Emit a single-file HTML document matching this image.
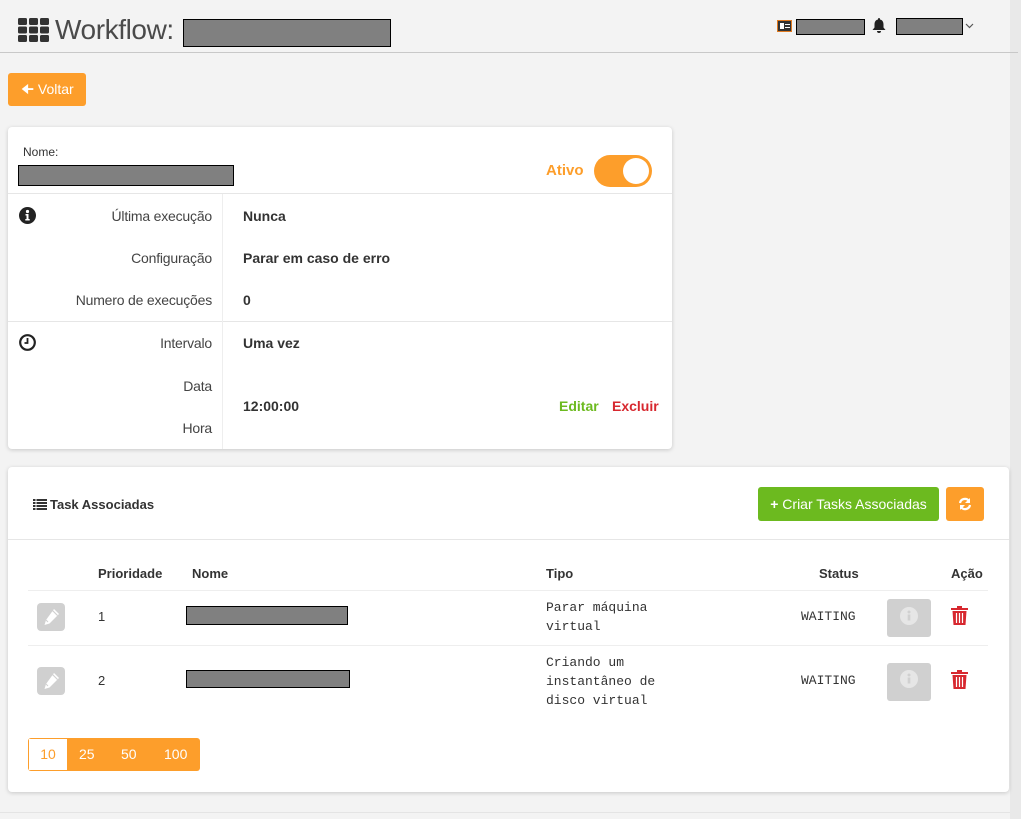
<!DOCTYPE html>
<html><head><meta charset="utf-8"><style>
*{box-sizing:border-box;margin:0;padding:0}
body{width:1021px;height:819px;background:#f3f3f3;font-family:"Liberation Sans",sans-serif;color:#333;position:relative;overflow:hidden}
.a{position:absolute}
.red{background:#808080;border:1px solid #000}
.card{background:#fff;border-radius:4px;box-shadow:0 1px 4px rgba(0,0,0,.18)}
.lbl{font-size:14px;color:#444;text-align:right;width:200px;left:12px;letter-spacing:-.2px}
.val{font-size:14px;font-weight:bold;color:#333;left:243px}
.mono{font-family:"Liberation Mono",monospace;font-size:13px;color:#333;line-height:19px}
.th{font-size:13px;font-weight:bold;color:#333}
.edit{width:28px;height:28px;background:#d0d0d0;border-radius:4px}
.info{width:44px;height:38px;background:#d0d0d0;border-radius:3px}
</style></head><body>
<div class="a" style="left:1010px;top:0;width:11px;height:819px;background:#e9e9e9"></div>
<!-- header -->
<svg class="a" style="left:18px;top:18px" width="31" height="24" viewBox="0 0 31 24">
<g fill="#333"><rect x="0" y="0" width="9" height="7" rx="1.5"/><rect x="11" y="0" width="9" height="7" rx="1.5"/><rect x="22" y="0" width="9" height="7" rx="1.5"/>
<rect x="0" y="8.5" width="9" height="7" rx="1.5"/><rect x="11" y="8.5" width="9" height="7" rx="1.5"/><rect x="22" y="8.5" width="9" height="7" rx="1.5"/>
<rect x="0" y="17" width="9" height="7" rx="1.5"/><rect x="11" y="17" width="9" height="7" rx="1.5"/><rect x="22" y="17" width="9" height="7" rx="1.5"/></g></svg>
<div class="a" style="left:55px;top:14px;font-size:28px;color:#4a4a4a;letter-spacing:-.4px">Workflow:</div>
<div class="a red" style="left:183px;top:19px;width:208px;height:28px"></div>
<div class="a" style="left:0;top:52px;width:1018px;height:1px;background:#c8c8c8"></div>
<div class="a" style="left:777px;top:20px;width:15px;height:12px;background:#333;border:1px solid #e07a20"><div style="position:absolute;left:2px;top:2px;width:4px;height:6px;background:#fff"></div><div style="position:absolute;left:7px;top:3px;width:5px;height:1px;background:#fff"></div><div style="position:absolute;left:7px;top:6px;width:5px;height:1px;background:#fff"></div></div>
<div class="a red" style="left:796px;top:19px;width:69px;height:16px"></div>
<svg class="a" style="left:872px;top:18px" width="14" height="15" viewBox="0 0 14 15"><path d="M7 0c1 0 1 1 1 1.5C10.5 2 11.5 4 11.5 6.5v3L13.5 12H.5l2-2.5v-3C2.5 4 3.5 2 6 1.5 6 1 6 0 7 0zM5 13h4a2 2 0 0 1-4 0z" fill="#222"/></svg>
<div class="a red" style="left:896px;top:18px;width:67px;height:17px"></div>
<svg class="a" style="left:965px;top:23px" width="9" height="6"><path d="M1 1l3.5 3.5L8 1" fill="none" stroke="#555" stroke-width="1.2"/></svg>
<!-- voltar -->
<div class="a" style="left:8px;top:73px;width:78px;height:33px;background:#fd9e2b;border-radius:3px;color:#fff;font-size:14px;line-height:33px;padding-left:13px">&#129032; Voltar</div>
<!-- card 1 -->
<div class="a card" style="left:8px;top:127px;width:664px;height:322px">
<div class="a" style="left:15px;top:18px;font-size:12px;color:#333">Nome:</div>
<div class="a red" style="left:10px;top:38px;width:216px;height:21px"></div>
<div class="a" style="left:538px;top:35px;font-size:15px;font-weight:bold;color:#fd9e2b">Ativo</div>
<div class="a" style="left:586px;top:28px;width:58px;height:32px;border-radius:16px;background:#fd9e2b"><div style="position:absolute;right:3px;top:3px;width:26px;height:26px;border-radius:50%;background:#fff"></div></div>
<div class="a" style="left:0;top:66px;width:664px;height:1px;background:#e6e6e6"></div>
<div class="a" style="left:0;top:194px;width:664px;height:1px;background:#e6e6e6"></div>
<div class="a" style="left:214px;top:67px;width:1px;height:255px;background:#eee"></div>
<svg class="a" style="left:11px;top:80px" width="17" height="17" viewBox="0 0 17 17"><circle cx="8.5" cy="8.5" r="8.5" fill="#222"/><circle cx="8.5" cy="4.5" r="1.6" fill="#fff"/><path d="M6.5 7h3v5h1.2v1.5H6.3V12h1.2V8.5h-1z" fill="#fff"/></svg>
<svg class="a" style="left:11px;top:207px" width="17" height="17" viewBox="0 0 17 17"><circle cx="8.5" cy="8.5" r="7.3" fill="none" stroke="#222" stroke-width="2.2"/><path d="M8.5 4v5H5.5" fill="none" stroke="#222" stroke-width="1.8"/></svg>
</div>
<div class="a lbl" style="top:208px">Última execução</div>
<div class="a lbl" style="top:250px">Configuração</div>
<div class="a lbl" style="top:292px">Numero de execuções</div>
<div class="a lbl" style="top:335px">Intervalo</div>
<div class="a lbl" style="top:378px">Data</div>
<div class="a lbl" style="top:420px">Hora</div>
<div class="a val" style="top:208px">Nunca</div>
<div class="a val" style="top:250px">Parar em caso de erro</div>
<div class="a val" style="top:292px">0</div>
<div class="a val" style="top:335px">Uma vez</div>
<div class="a val" style="top:398px">12:00:00</div>
<div class="a" style="left:559px;top:398px;font-size:14px;font-weight:bold;color:#6cba1f">Editar</div>
<div class="a" style="left:612px;top:398px;font-size:14px;font-weight:bold;color:#d7282f">Excluir</div>
<!-- card 2 -->
<div class="a card" style="left:8px;top:467px;width:1001px;height:325px">
<div class="a" style="left:0;top:72px;width:1001px;height:1px;background:#e6e6e6"></div>
<div class="a" style="left:20px;top:123px;width:960px;height:1px;background:#eee"></div>
<div class="a" style="left:20px;top:178px;width:960px;height:1px;background:#eee"></div>
</div>
<svg class="a" style="left:33px;top:499px" width="14" height="11" viewBox="0 0 14 11"><g fill="#333"><rect x="0" y="0" width="2.5" height="2"/><rect x="3.5" y="0" width="10.5" height="2"/><rect x="0" y="3" width="2.5" height="2"/><rect x="3.5" y="3" width="10.5" height="2"/><rect x="0" y="6" width="2.5" height="2"/><rect x="3.5" y="6" width="10.5" height="2"/><rect x="0" y="9" width="2.5" height="2"/><rect x="3.5" y="9" width="10.5" height="2"/></g></svg>
<div class="a" style="left:50px;top:497px;font-size:13px;font-weight:bold;color:#333">Task Associadas</div>
<div class="a" style="left:758px;top:487px;width:181px;height:34px;background:#6cba1f;border-radius:3px;color:#fff;font-size:14px;line-height:34px;text-align:center"><b>+</b> Criar Tasks Associadas</div>
<div class="a" style="left:946px;top:487px;width:38px;height:34px;background:#fd9e2b;border-radius:3px"></div>
<svg class="a" style="left:958px;top:497px" width="14" height="14" viewBox="0 0 14 14"><path d="M2 6a5 5 0 0 1 9-2" fill="none" stroke="#fff" stroke-width="2.2"/><path d="M12 1v5H7z" fill="#fff"/><path d="M12 8a5 5 0 0 1-9 2" fill="none" stroke="#fff" stroke-width="2.2"/><path d="M2 13V8h5z" fill="#fff"/></svg>
<div class="a th" style="left:98px;top:566px">Prioridade</div>
<div class="a th" style="left:192px;top:566px">Nome</div>
<div class="a th" style="left:546px;top:566px">Tipo</div>
<div class="a th" style="left:819px;top:566px">Status</div>
<div class="a th" style="left:951px;top:566px">Ação</div>
<!-- row1 -->
<div class="a edit" style="left:37px;top:603px"></div>
<svg class="a" style="left:42px;top:608px" width="18" height="18" viewBox="0 0 18 18"><path d="M12 1l5 5-9.5 9.5-5 1.5 1.5-5z" fill="#fff"/><path d="M10.5 2.5l5 5" stroke="#d0d0d0" stroke-width="1.2"/><path d="M4 12l2 2" stroke="#d0d0d0" stroke-width="1"/></svg>
<div class="a" style="left:98px;top:609px;font-size:13px">1</div>
<div class="a red" style="left:186px;top:606px;width:162px;height:19px"></div>
<div class="a mono" style="left:546px;top:598px">Parar máquina<br>virtual</div>
<div class="a mono" style="left:801px;top:607px">WAITING</div>
<div class="a info" style="left:887px;top:599px"></div>
<svg class="a" style="left:900px;top:607px" width="18" height="18"><circle cx="9" cy="9" r="9" fill="#e6e6e6"/><rect x="7.7" y="7.5" width="2.6" height="6" fill="#d0d0d0"/><circle cx="9" cy="5" r="1.5" fill="#d0d0d0"/></svg>
<svg class="a" style="left:951px;top:606px" width="17" height="19" viewBox="0 0 17 19"><path d="M6 0h5v2h6v2H0V2h6zM1.5 5h14l-1 14h-12z" fill="#d7282f"/><path d="M5.5 7v10M8.5 7v10M11.5 7v10" stroke="#fff" stroke-width="1.2"/></svg>
<!-- row2 -->
<div class="a edit" style="left:37px;top:667px"></div>
<svg class="a" style="left:42px;top:672px" width="18" height="18" viewBox="0 0 18 18"><path d="M12 1l5 5-9.5 9.5-5 1.5 1.5-5z" fill="#fff"/><path d="M10.5 2.5l5 5" stroke="#d0d0d0" stroke-width="1.2"/><path d="M4 12l2 2" stroke="#d0d0d0" stroke-width="1"/></svg>
<div class="a" style="left:98px;top:673px;font-size:13px">2</div>
<div class="a red" style="left:186px;top:670px;width:164px;height:18px"></div>
<div class="a mono" style="left:546px;top:653px">Criando um<br>instantâneo de<br>disco virtual</div>
<div class="a mono" style="left:801px;top:671px">WAITING</div>
<div class="a info" style="left:887px;top:663px"></div>
<svg class="a" style="left:900px;top:670px" width="18" height="18"><circle cx="9" cy="9" r="9" fill="#e6e6e6"/><rect x="7.7" y="7.5" width="2.6" height="6" fill="#d0d0d0"/><circle cx="9" cy="5" r="1.5" fill="#d0d0d0"/></svg>
<svg class="a" style="left:951px;top:670px" width="17" height="19" viewBox="0 0 17 19"><path d="M6 0h5v2h6v2H0V2h6zM1.5 5h14l-1 14h-12z" fill="#d7282f"/><path d="M5.5 7v10M8.5 7v10M11.5 7v10" stroke="#fff" stroke-width="1.2"/></svg>
<!-- pagination -->
<div class="a" style="left:28px;top:738px;width:172px;height:33px;background:#fd9e2b;border-radius:3px"></div>
<div class="a" style="left:29px;top:739px;width:38px;height:31px;background:#fff;color:#fd9e2b;font-size:14px;line-height:31px;text-align:center">10</div>
<div class="a" style="left:79px;top:746px;color:#fff;font-size:14px">25</div>
<div class="a" style="left:121px;top:746px;color:#fff;font-size:14px">50</div>
<div class="a" style="left:164px;top:746px;color:#fff;font-size:14px">100</div>
<div class="a" style="left:0;top:812px;width:1010px;height:1px;background:#e4e4e4"></div>
</body></html>
